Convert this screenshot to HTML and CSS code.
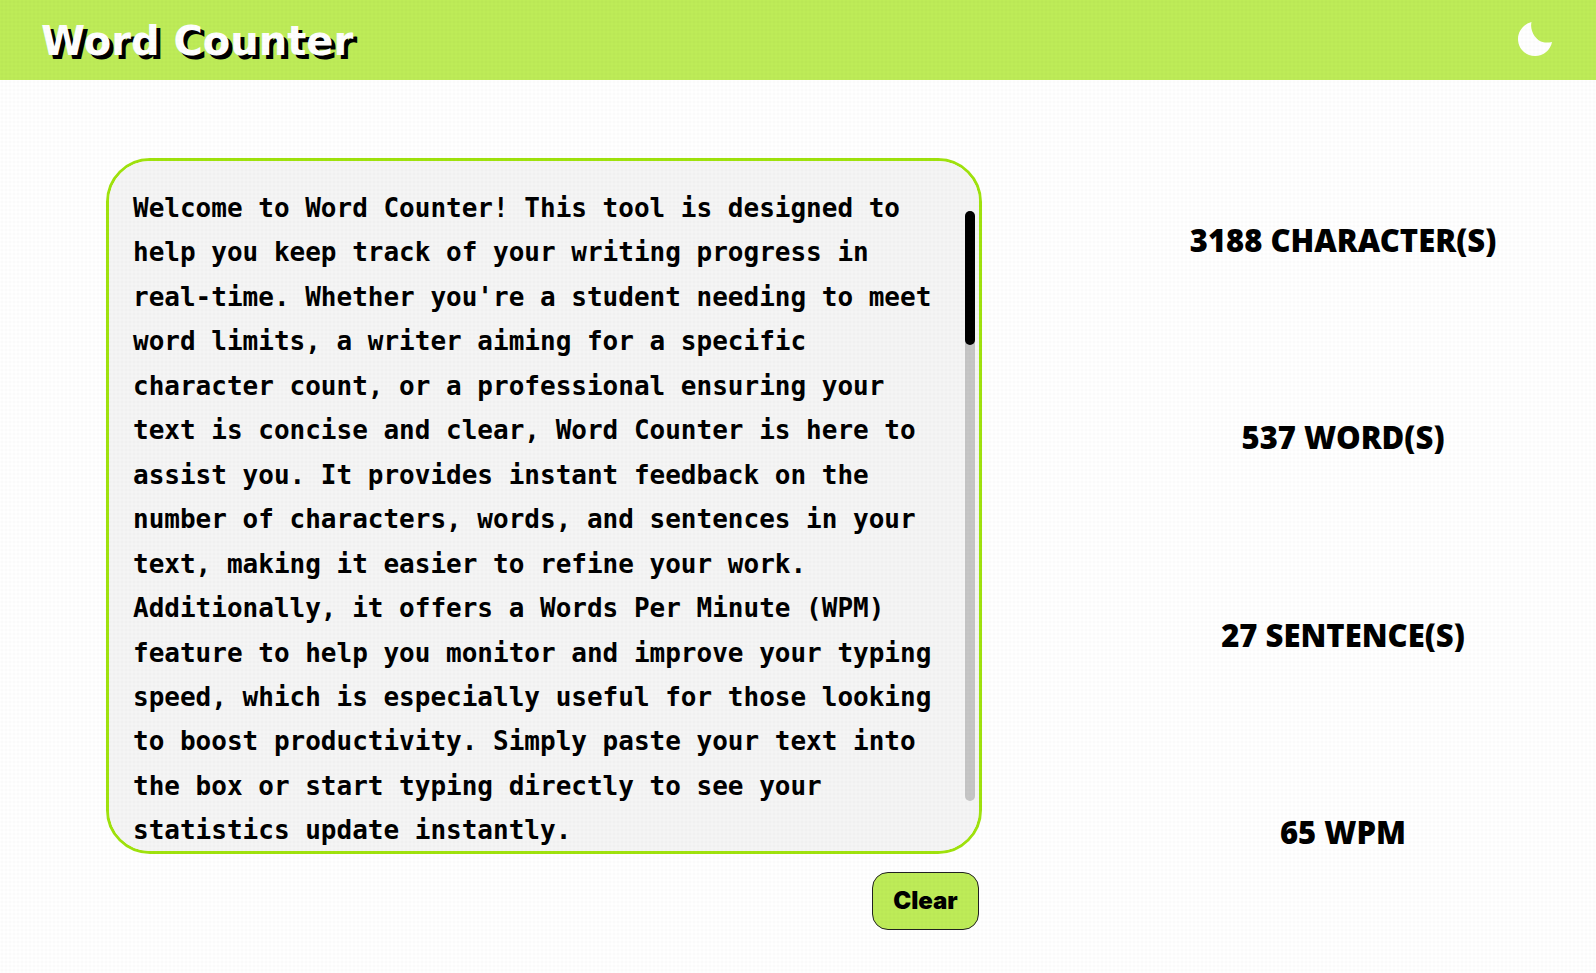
FILE: index.html
```html
<!DOCTYPE html>
<html lang="en">
<head>
<meta charset="utf-8">
<meta name="viewport" content="width=device-width, initial-scale=1">
<title>Word Counter</title>
<link rel="stylesheet" href="styles.css">
</head>
<body>
<header class="header">
<h1 class="title">Word Counter</h1>
<button class="theme" type="button" aria-label="Dark mode">
<svg class="moon" viewBox="0 0 36 36" aria-hidden="true"><path d="M14.5 1C6.8 3 1 9.800 1 18C1 27.500 8.500 35 18 35C26.500 35 33.500 29 35 21C32 21.500 29 21.900 26.500 21.300C18.500 19.500 12.500 9.500 14.500 1Z" fill="#fff"/></svg>
</button>
</header>
<main class="main">
<section class="editor">
<div class="box">
<textarea class="text" aria-label="Text to count" spellcheck="false">Welcome to Word Counter! This tool is designed to help you keep track of your writing progress in real-time. Whether you're a student needing to meet word limits, a writer aiming for a specific character count, or a professional ensuring your text is concise and clear, Word Counter is here to assist you. It provides instant feedback on the number of characters, words, and sentences in your text, making it easier to refine your work. Additionally, it offers a Words Per Minute (WPM) feature to help you monitor and improve your typing speed, which is especially useful for those looking to boost productivity. Simply paste your text into the box or start typing directly to see your statistics update instantly.</textarea>
<div class="track"><div class="thumb"></div></div>
</div>
<button class="clear" type="button">Clear</button>
</section>
<section class="stats" aria-label="Statistics">
<p class="stat">3188 CHARACTER(S)</p>
<p class="stat">537 WORD(S)</p>
<p class="stat">27 SENTENCE(S)</p>
<p class="stat">65 WPM</p>
</section>
</main>
</body>
</html>
```
FILE: styles.css
```css
* { box-sizing: border-box; }
body {
  margin: 0;
  min-height: 100vh;
  display: flex;
  flex-direction: column;
  background: #fff;
  color: #000;
  font-family: "Noto Sans", sans-serif;
}
body::after {
  content: "";
  position: fixed;
  inset: 0;
  pointer-events: none;
  background-image: radial-gradient(circle, rgba(0, 0, 0, .02) 1px, transparent 2px);
  background-size: 4px 4px;
}
.header {
  display: flex;
  align-items: center;
  justify-content: space-between;
  height: 80px;
  padding: 0 43px 0 41px;
  background: #beec58;
}
.title {
  margin: 0;
  padding-top: 2px;
  color: #fff;
  font: bold 40px/48px "DejaVu Sans", sans-serif;
  text-shadow: 4px 4px 0 #000;
}
.theme {
  padding: 0 0 2px;
  border: 0;
  background: none;
  cursor: pointer;
}
.moon { display: block; width: 36px; height: 36px; }
.main {
  flex: 1;
  display: grid;
  grid-template-columns: 1fr 506px;
  gap: 108px;
  padding: 78px 0 43px 106px;
}
.editor {
  display: flex;
  flex-direction: column;
  gap: 18px;
}
.box { position: relative; flex: 1; display: flex; }
.text {
  flex: 1;
  resize: none;
  outline: 0;
  padding: 25px 38px 0 24px;
  border: 3px solid #a0e30d;
  border-radius: 44px;
  background: #f5f5f5;
  color: #000;
  font: bold 26px/1.71 "DejaVu Sans Mono", monospace;
  scrollbar-width: none;
}
.track {
  position: absolute;
  top: 53px;
  bottom: 53px;
  right: 7px;
  width: 10px;
  border-radius: 5px;
  background: #c6c6c6;
}
.thumb { height: 134px; border-radius: 5px; background: #000; }
.clear {
  align-self: flex-end;
  margin-right: 3px;
  width: 107px;
  height: 58px;
  border: 1px solid #222;
  border-radius: 16px;
  background: #beec58;
  color: #000;
  font: 900 24px/28px Inter, sans-serif;
}
.stats {
  display: flex;
  flex-direction: column;
  justify-content: space-between;
  padding: 62px 0 78px;
}
.stat {
  margin: 0;
  text-align: center;
  font-size: 31px;
  font-weight: 900;
  line-height: 40px;
}
```
